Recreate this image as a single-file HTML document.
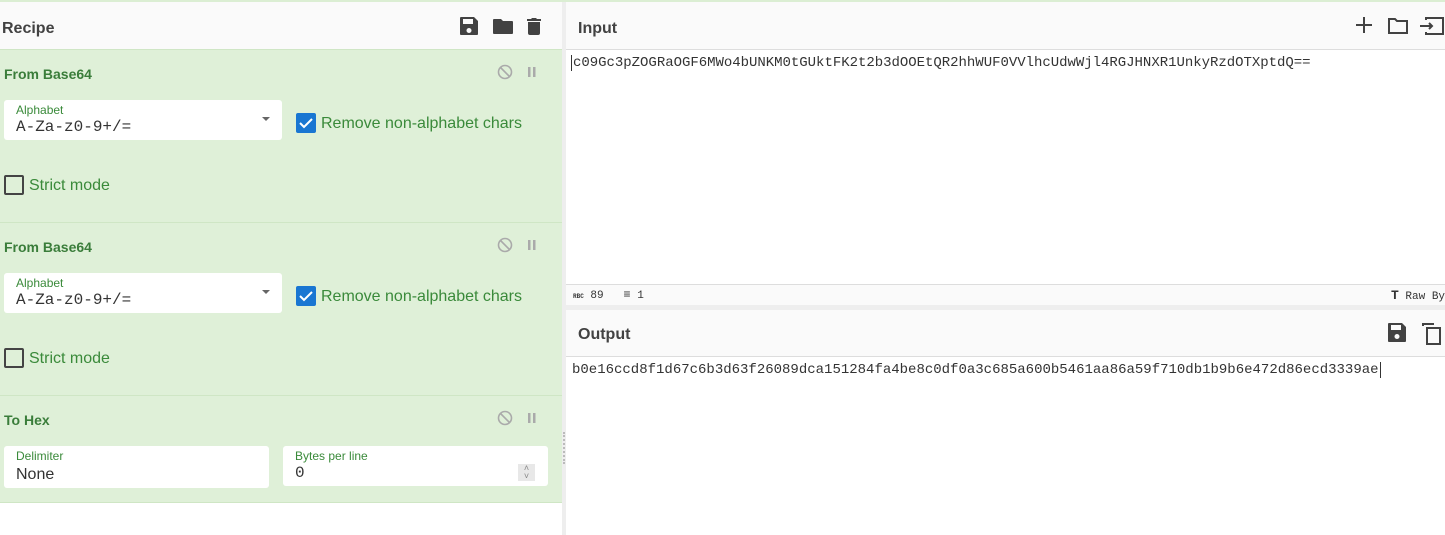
<!DOCTYPE html>
<html><head><style>
*{box-sizing:border-box;margin:0;padding:0}
body{width:1445px;height:535px;overflow:hidden;background:#fff;font-family:"Liberation Sans",sans-serif;position:relative}
.abs{position:absolute}
.hdr{background:#fafafa;border-bottom:1px solid #ddd;height:48px}
.title{font-size:16px;font-weight:bold;color:#424242}
.op{position:absolute;left:0;width:562px;background:#dff0d8;border-top:1px solid #cfe6c5}
.opt{position:absolute;left:4px;font-size:14px;font-weight:bold;color:#3a7d3a}
.box{position:absolute;background:#fff;border-radius:3px}
.lbl{position:absolute;left:12px;top:3px;font-size:12px;color:#3a8a3a}
.val{position:absolute;left:12px;top:18px;font-size:16px;color:#333}
.mono{font-family:"Liberation Mono",monospace}
.chk{position:absolute;width:20px;height:20px;border-radius:2px}
.ctext{position:absolute;font-size:16px;color:#3a8a3a}
</style></head><body>
<div class="abs" style="left:0;top:0;width:1445px;height:2px;background:#dbeed3"></div>
<div class="abs hdr" style="left:0;top:2px;width:562px"></div>
<div class="abs title" style="left:2px;top:20px">Recipe</div>
<svg class="abs" style="left:459px;top:15px" width="90" height="22" viewBox="0 0 90 22">
<path fill="#424242" d="M2 2h13l4 4v13a1 1 0 0 1-1 1H2a1 1 0 0 1-1-1V3a1 1 0 0 1 1-1zm2 2v5h10V4zm6 9a2.5 2.5 0 1 0 0.01 0z"/>
<path fill="#424242" d="M35 4h7l2 2h9a1 1 0 0 1 1 1v11a1 1 0 0 1-1 1H35a1 1 0 0 1-1-1V5a1 1 0 0 1 1-1z"/>
<path fill="#424242" d="M73 3h4l1 1h4v2H68V4h4zM69 7h12v11a2 2 0 0 1-2 2h-8a2 2 0 0 1-2-2z"/>
</svg>
<div class="op" style="top:49px;height:174px"></div>
<div class="opt" style="top:66px">From Base64</div>
<svg class="abs" style="left:497px;top:64px" width="45" height="16"><circle cx="8" cy="8" r="6.5" fill="none" stroke="#aaa" stroke-width="1.6"/><path d="M3.5 3.5l9 9" stroke="#aaa" stroke-width="1.6"/><rect x="31" y="3" width="2.5" height="10" fill="#aaa"/><rect x="36" y="3" width="2.5" height="10" fill="#aaa"/></svg>
<div class="box" style="left:4px;top:100px;width:278px;height:40px"><div class="lbl">Alphabet</div><div class="val mono">A-Za-z0-9+/=</div><div class="abs" style="left:258px;top:17px;border:4px solid transparent;border-top:4px solid #666"></div></div>
<div class="chk" style="left:296px;top:113px;background:#1976d2"><svg width="20" height="20"><path d="M4 10l4 4 8-8" stroke="#fff" stroke-width="2" fill="none"/></svg></div>
<div class="ctext" style="left:321px;top:115px">Remove non-alphabet chars</div>
<div class="chk" style="left:4px;top:175px;border:2px solid #444"></div>
<div class="ctext" style="left:29px;top:177px">Strict mode</div>
<div class="op" style="top:222px;height:174px"></div>
<div class="opt" style="top:239px">From Base64</div>
<svg class="abs" style="left:497px;top:237px" width="45" height="16"><circle cx="8" cy="8" r="6.5" fill="none" stroke="#aaa" stroke-width="1.6"/><path d="M3.5 3.5l9 9" stroke="#aaa" stroke-width="1.6"/><rect x="31" y="3" width="2.5" height="10" fill="#aaa"/><rect x="36" y="3" width="2.5" height="10" fill="#aaa"/></svg>
<div class="box" style="left:4px;top:273px;width:278px;height:40px"><div class="lbl">Alphabet</div><div class="val mono">A-Za-z0-9+/=</div><div class="abs" style="left:258px;top:17px;border:4px solid transparent;border-top:4px solid #666"></div></div>
<div class="chk" style="left:296px;top:286px;background:#1976d2"><svg width="20" height="20"><path d="M4 10l4 4 8-8" stroke="#fff" stroke-width="2" fill="none"/></svg></div>
<div class="ctext" style="left:321px;top:288px">Remove non-alphabet chars</div>
<div class="chk" style="left:4px;top:348px;border:2px solid #444"></div>
<div class="ctext" style="left:29px;top:350px">Strict mode</div>
<div class="op" style="top:395px;height:108px;border-bottom:1px solid #cfe6c5"></div>
<div class="opt" style="top:412px">To Hex</div>
<svg class="abs" style="left:497px;top:410px" width="45" height="16"><circle cx="8" cy="8" r="6.5" fill="none" stroke="#aaa" stroke-width="1.6"/><path d="M3.5 3.5l9 9" stroke="#aaa" stroke-width="1.6"/><rect x="31" y="3" width="2.5" height="10" fill="#aaa"/><rect x="36" y="3" width="2.5" height="10" fill="#aaa"/></svg>
<div class="box" style="left:4px;top:446px;width:265px;height:42px"><div class="lbl">Delimiter</div><div class="val" style="top:20px">None</div></div>
<div class="box" style="left:283px;top:446px;width:265px;height:40px"><div class="lbl">Bytes per line</div><div class="val mono">0</div><div class="abs" style="left:235px;top:18px;width:17px;height:17px;background:#e8e8e8;color:#888;font-size:9px;line-height:8px;text-align:center">˄<br>˅</div></div>
<div class="abs" style="left:562px;top:2px;width:4px;height:533px;background:#eee"></div>
<div class="abs" style="left:563px;top:432px;width:2px;height:32px;border-left:2px dotted #bbb"></div>
<div class="abs hdr" style="left:566px;top:2px;width:879px"></div>
<div class="abs title" style="left:578px;top:20px">Input</div>
<svg class="abs" style="left:1354px;top:15px" width="91" height="22" viewBox="0 0 91 22">
<path d="M10 2v16M2 10h16" stroke="#424242" stroke-width="2"/>
<path d="M35 4h6l2 2h10v12H35z" fill="none" stroke="#424242" stroke-width="2"/>
<path d="M72 5v-2h17v16H72v-2M66 11h12M75 8l3 3-3 3" fill="none" stroke="#424242" stroke-width="2"/>
</svg>
<div class="abs mono" style="left:571px;top:55px;font-size:14px;color:#333;border-left:1px solid #333;padding-left:1px;letter-spacing:-0.02px;white-space:nowrap">c09Gc3pZOGRaOGF6MWo4bUNKM0tGUktFK2t2b3dOOEtQR2hhWUF0VVlhcUdwWjl4RGJHNXR1UnkyRzdOTXptdQ==</div>
<div class="abs" style="left:566px;top:284px;width:879px;height:21px;background:#fafafa;border-top:1px solid #ddd"></div>
<div class="abs mono" style="left:573px;top:288px;font-size:11px;color:#333"><b style="font-size:6px">RBC</b> 89 &nbsp;&nbsp;<span style="font-size:12px">≡</span> 1</div>
<div class="abs mono" style="left:1391px;top:288px;font-size:11px;color:#333;white-space:nowrap"><b style="font-size:13px">T</b> Raw By</div>
<div class="abs" style="left:566px;top:305px;width:879px;height:5px;background:#eee"></div>
<div class="abs hdr" style="left:566px;top:310px;width:879px;height:47px"></div>
<div class="abs title" style="left:578px;top:326px">Output</div>
<svg class="abs" style="left:1387px;top:322px" width="58" height="24">
<path fill="#424242" d="M2 1h13l4 4v14a1 1 0 0 1-1 1H2a1 1 0 0 1-1-1V2a1 1 0 0 1 1-1zm2 2v5h10V3zm6 9a2.5 2.5 0 1 0 0.01 0z"/>
<path d="M36 4v-2h11M40 6h13v16H40z" fill="none" stroke="#424242" stroke-width="2"/>
</svg>
<div class="abs mono" style="left:572px;top:362px;font-size:14px;color:#333;border-right:1px solid #333;padding-right:1px;white-space:nowrap">b0e16ccd8f1d67c6b3d63f26089dca151284fa4be8c0df0a3c685a600b5461aa86a59f710db1b9b6e472d86ecd3339ae</div>
</body></html>
